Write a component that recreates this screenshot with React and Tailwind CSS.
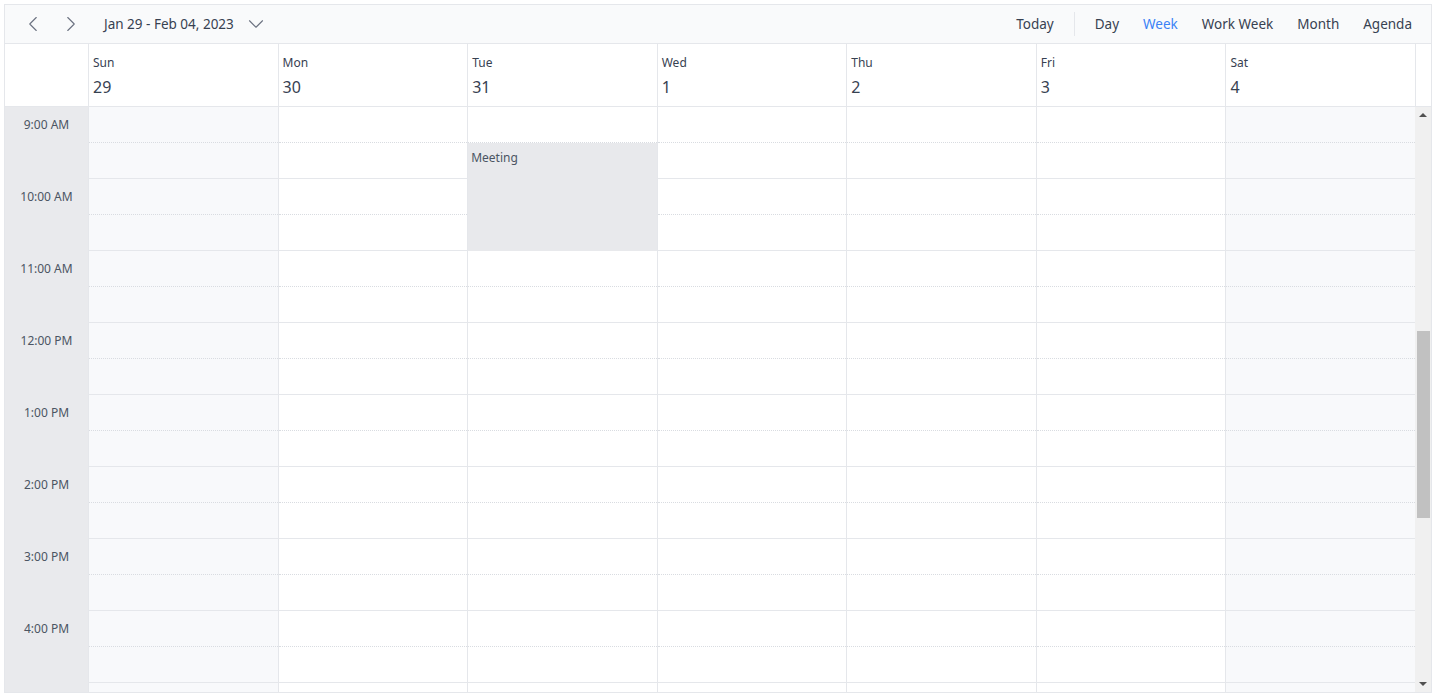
import { ChevronLeft, ChevronRight, ChevronDown } from 'lucide-react'

const days = [
  { name: 'Sun', date: '29', weekend: true },
  { name: 'Mon', date: '30' },
  { name: 'Tue', date: '31' },
  { name: 'Wed', date: '1' },
  { name: 'Thu', date: '2' },
  { name: 'Fri', date: '3' },
  { name: 'Sat', date: '4', weekend: true },
]

// last slot is only partly visible, its label sits below the fold
const hours = ['9:00 AM', '10:00 AM', '11:00 AM', '12:00 PM', '1:00 PM', '2:00 PM', '3:00 PM', '4:00 PM', '']

const views = ['Day', 'Week', 'Work Week', 'Month', 'Agenda']

function Toolbar() {
  return (
    <div className="flex h-[39px] items-center border-b border-[#e5e7eb] bg-[#f9fafb] text-[13.5px] text-[#374151]">
      <div className="flex items-center pl-[14px]">
        <button className="flex h-[28px] w-[28px] items-center justify-center text-[#6b7280]">
          <ChevronLeft size={26} strokeWidth={1} />
        </button>
        <button className="ml-[10px] flex h-[28px] w-[28px] items-center justify-center text-[#6b7280]">
          <ChevronRight size={26} strokeWidth={1} />
        </button>
        <span className="ml-[19px]">Jan 29 - Feb 04, 2023</span>
        <ChevronDown size={26} strokeWidth={1} className="ml-[9px] text-[#6b7280]" />
      </div>
      <div className="ml-auto flex items-center pr-[7px]">
        <button className="px-3">Today</button>
        <div className="mx-[8px] h-[24px] w-px bg-[#e5e7eb]" />
        {views.map((v) => (
          <button key={v} className={`px-3 ${v === 'Week' ? 'text-[#3b82f6]' : ''}`}>
            {v}
          </button>
        ))}
      </div>
    </div>
  )
}

function Header() {
  return (
    <div className="flex h-[63px] border-b border-[#e5e7eb] bg-white">
      <div className="w-[83px] shrink-0" />
      <div className="grid flex-1 grid-cols-7">
        {days.map((d) => (
          <div key={d.name} className="border-l border-[#e5e7eb] pl-[4px] pt-[11px] text-[#374151]">
            <div className="text-[12px] leading-[16px]">{d.name}</div>
            <div className="mt-[5px] text-[16px] leading-[22px]">{d.date}</div>
          </div>
        ))}
      </div>
      <div className="w-[16px] shrink-0 border-l border-[#e5e7eb]" />
    </div>
  )
}

function Column({ weekend, children }) {
  return (
    <div className={`relative border-l border-[#e5e7eb] ${weekend ? 'bg-[#f8f9fb]' : 'bg-white'}`}>
      {hours.map((h, i) => (
        <div key={i} className="h-[72px] border-b border-[#e5e7eb]">
          <div className="h-[36px] border-b border-dotted border-[#d9dce1]" />
        </div>
      ))}
      {children}
    </div>
  )
}

function Scrollbar() {
  return (
    <div className="relative flex w-[16px] shrink-0 flex-col items-center bg-[#f0f0f0]">
      <div className="mt-[6px] h-0 w-0 border-x-[4px] border-b-[4px] border-x-transparent border-b-[#505050]" />
      <div className="mt-[214px] h-[187px] w-[13px] bg-[#c1c1c1]" />
      <div className="mt-auto mb-[6px] h-0 w-0 border-x-[4px] border-t-[4px] border-x-transparent border-t-[#505050]" />
    </div>
  )
}

function Body() {
  return (
    <div className="flex h-[585px] overflow-hidden">
      <div className="w-[83px] shrink-0 bg-[#e9eaed]">
        {hours.map((h, i) => (
          <div key={i} className="h-[72px]">
            <div className="flex h-[36px] items-center justify-center text-[12px] text-[#4b5563]">{h}</div>
          </div>
        ))}
      </div>
      <div className="grid flex-1 grid-cols-7 items-start">
        {days.map((d) => (
          <Column key={d.name} weekend={d.weekend}>
            {d.name === 'Tue' && (
              <div className="absolute left-0 right-0 top-[36px] h-[108px] bg-[#e8e9ec] px-[3px] pt-[6px] text-[12px] text-[#4b5563]">
                Meeting
              </div>
            )}
          </Column>
        ))}
      </div>
      <Scrollbar />
    </div>
  )
}

export default function App() {
  return (
    <div className="p-[4px]" style={{ fontFamily: '"Segoe UI", "Noto Sans", sans-serif' }}>
      <div className="overflow-hidden border border-[#e5e7eb]">
        <Toolbar />
        <Header />
        <Body />
      </div>
    </div>
  )
}
